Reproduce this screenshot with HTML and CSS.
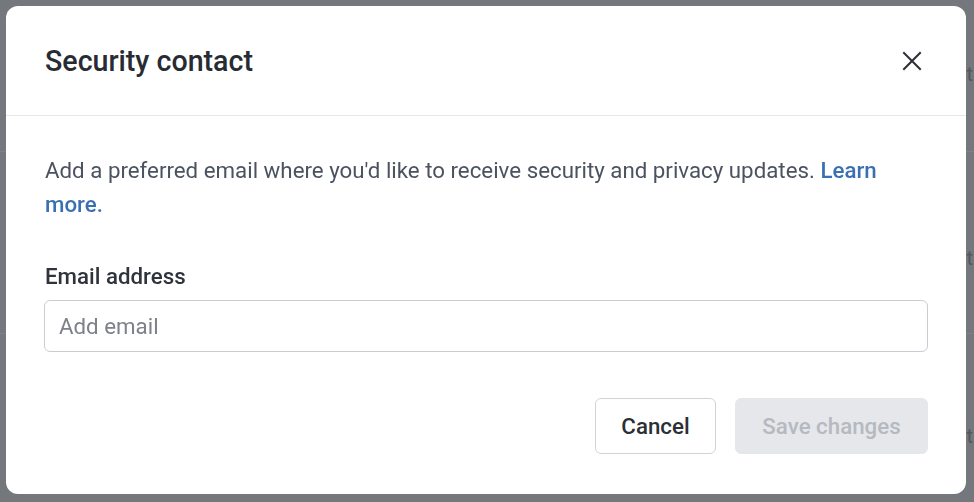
FILE: index.html
```html
<!DOCTYPE html>
<html lang="en">
<head>
<meta charset="utf-8">
<title>Security contact</title>
<link rel="stylesheet" href="styles.css">
</head>
<body>
<div class="page">
  <div class="page-row r1"><span class="page-text">t</span></div>
  <div class="page-row r2"><span class="page-text">t</span></div>
  <div class="page-row r3"><span class="page-text">t</span></div>
</div>
<div class="backdrop">
  <div class="modal" role="dialog" aria-labelledby="modal-title">
    <div class="modal-header">
      <h2 id="modal-title" class="modal-title">Security contact</h2>
      <button class="close-btn" aria-label="Close">
        <svg width="20" height="20" viewBox="0 0 20 20" fill="none" stroke="#2b2f36" stroke-width="2" stroke-linecap="square">
          <path d="M2 2 L18 18 M18 2 L2 18"/>
        </svg>
      </button>
    </div>
    <div class="modal-body">
      <p class="desc">Add a preferred email where you'd like to receive security and privacy updates. <a class="link" href="#">Learn more.</a></p>
      <label class="field-label" for="email">Email address</label>
      <input id="email" class="field-input" type="email" placeholder="Add email">
      <div class="actions">
        <button class="btn btn-secondary">Cancel</button>
        <button class="btn btn-primary" disabled>Save changes</button>
      </div>
    </div>
  </div>
</div>
</body>
</html>
```
FILE: styles.css
```css
* { box-sizing: border-box; }
html, body { margin: 0; padding: 0; }
body {
  width: 974px;
  height: 502px;
  overflow: hidden;
  background: #74777b;
  font-family: Roboto, "Noto Sans", "Liberation Sans", sans-serif;
}
.page {
  display: flex;
  flex-direction: column;
}
.page-row {
  display: flex;
  justify-content: flex-end;
  align-items: flex-start;
  border-bottom: 1px solid #7e8185;
  color: #54575b;
  font-size: 20px;
  line-height: 24px;
  padding-right: 1px;
}
.r1 { height: 152px; padding-top: 62px; }
.r2 { height: 182px; padding-top: 94px; }
.r3 { height: 168px; border-bottom: none; padding-top: 90px; }
.backdrop {
  position: fixed;
  inset: 0;
  padding: 6px 8px 8px 6px;
}
.modal {
  width: 960px;
  height: 488px;
  background: #ffffff;
  border-radius: 12px;
  display: flex;
  flex-direction: column;
}
.modal-header {
  height: 110px;
  flex: none;
  display: flex;
  align-items: center;
  justify-content: space-between;
  padding: 0 44px 0 39px;
  border-bottom: 1px solid #e5e7eb;
}
.modal-title {
  margin: 0;
  font-size: 28.6px;
  font-weight: 500;
  color: #272b33;
  line-height: 34px;
}
.close-btn {
  background: none;
  border: none;
  padding: 0;
  width: 20px;
  height: 20px;
  display: flex;
  cursor: pointer;
}
.modal-body {
  padding: 37px 38px 0 38px;
  display: flex;
  flex-direction: column;
}
.desc {
  margin: 0;
  font-size: 22.3px;
  line-height: 34px;
  color: #4b5260;
  padding-left: 1px;
}
.link {
  color: #3a6fb4;
  font-weight: 500;
  text-decoration: none;
}
.field-label {
  margin-top: 41px;
  font-size: 22.3px;
  line-height: 28px;
  font-weight: 500;
  color: #2f343c;
  padding-left: 1px;
}
.field-input {
  margin-top: 10px;
  height: 52px;
  width: 884px;
  border: 1px solid #c8ccd3;
  border-radius: 6px;
  padding: 0 14px;
  font-family: inherit;
  font-size: 22.3px;
  color: #2f343c;
  outline: none;
}
.field-input::placeholder { color: #7c818a; }
.actions {
  margin-top: 46px;
  display: flex;
  justify-content: flex-end;
  gap: 19px;
}
.btn {
  height: 56px;
  border-radius: 6px;
  font-family: inherit;
  font-size: 22.3px;
  font-weight: 500;
  padding: 0;
}
.btn-secondary {
  width: 121px;
  background: #ffffff;
  border: 1px solid #d0d4da;
  color: #2b2f36;
}
.btn-primary {
  width: 193px;
  background: #e5e7eb;
  border: 1px solid #e5e7eb;
  color: #b5b9c0;
}
```
